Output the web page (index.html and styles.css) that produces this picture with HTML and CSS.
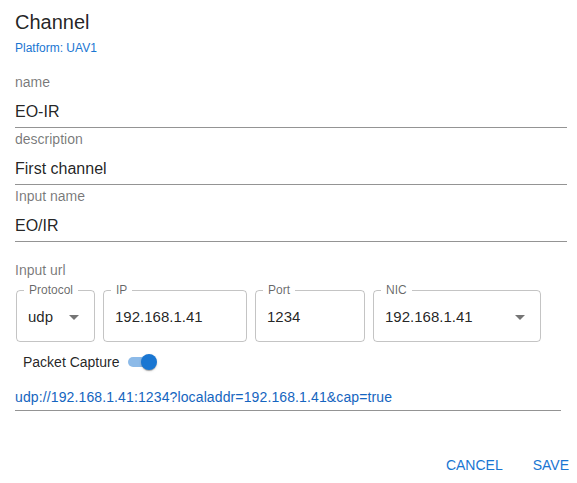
FILE: index.html
```html
<!DOCTYPE html>
<html lang="en">
<head>
<meta charset="utf-8">
<title>Channel</title>
<link rel="stylesheet" href="styles.css">
</head>
<body>
<div class="dialog">
  <header class="dialog-title">
    <h2 class="title">Channel</h2>
    <div class="subtitle">Platform: UAV1</div>
  </header>

  <div class="dialog-content">
    <div class="field">
      <div class="field-label">name</div>
      <div class="field-input">EO-IR</div>
    </div>
    <div class="field">
      <div class="field-label">description</div>
      <div class="field-input">First channel</div>
    </div>
    <div class="field">
      <div class="field-label">Input name</div>
      <div class="field-input">EO/IR</div>
    </div>

    <div class="url-group">
      <div class="field-label">Input url</div>
      <div class="outlined-row">
        <fieldset class="outlined protocol">
          <legend>Protocol</legend>
          <div class="outlined-value select">
            <span class="value-text">udp</span>
            <svg class="arrow" viewBox="0 0 24 24" width="24" height="24"><path d="M7 10l5 5 5-5z"/></svg>
          </div>
        </fieldset>
        <fieldset class="outlined ip">
          <legend>IP</legend>
          <div class="outlined-value"><span class="value-text">192.168.1.41</span></div>
        </fieldset>
        <fieldset class="outlined port">
          <legend>Port</legend>
          <div class="outlined-value"><span class="value-text">1234</span></div>
        </fieldset>
        <fieldset class="outlined nic">
          <legend>NIC</legend>
          <div class="outlined-value select">
            <span class="value-text">192.168.1.41</span>
            <svg class="arrow" viewBox="0 0 24 24" width="24" height="24"><path d="M7 10l5 5 5-5z"/></svg>
          </div>
        </fieldset>
      </div>

      <div class="switch-row">
        <span class="switch-label">Packet Capture</span>
        <span class="switch">
          <span class="switch-track"></span>
          <span class="switch-thumb"></span>
        </span>
      </div>

      <div class="url-value">udp://192.168.1.41:1234?localaddr=192.168.1.41&amp;cap=true</div>
    </div>
  </div>

  <div class="dialog-actions">
    <button class="btn" type="button">Cancel</button>
    <button class="btn" type="button">Save</button>
  </div>
</div>
</body>
</html>
```

FILE: styles.css
```css
* { box-sizing: border-box; }

html, body {
  margin: 0;
  padding: 0;
  background: #ffffff;
}

body {
  width: 577px;
  height: 483px;
  overflow: hidden;
  font-family: "Liberation Sans", Arial, sans-serif;
  color: rgba(0, 0, 0, 0.87);
}

.dialog {
  display: flex;
  flex-direction: column;
}

.dialog-title {
  padding: 10px 10px 0 15px;
}

.title {
  margin: 0;
  font-size: 20px;
  font-weight: 400;
  line-height: 24px;
  color: rgba(0, 0, 0, 0.87);
}

.subtitle {
  margin-top: 6px;
  font-size: 12px;
  line-height: 16px;
  color: #1976d2;
}

.dialog-content {
  padding: 16px 10px 0 15px;
  display: flex;
  flex-direction: column;
  gap: 1px;
}

.field {
  display: flex;
  flex-direction: column;
}

.field-label {
  font-size: 14px;
  line-height: 20px;
  color: rgba(0, 0, 0, 0.54);
}

.field-input {
  padding: 10px 0 5px;
  font-size: 16px;
  line-height: 20px;
  color: rgba(0, 0, 0, 0.87);
  border-bottom: 1px solid rgba(0, 0, 0, 0.42);
}

.url-group {
  margin-top: 17px;
  display: flex;
  flex-direction: column;
}

.outlined-row {
  display: flex;
  gap: 8px;
  margin-top: 3px;
  padding-left: 1px;
}

.outlined {
  margin: 0;
  padding: 0 0 0 11px;
  border: 1px solid rgba(0, 0, 0, 0.23);
  border-radius: 4px;
  min-width: 0;
}

.outlined legend {
  margin-left: -4px;
  padding: 0 5px;
  font-size: 12px;
  line-height: 14px;
  color: rgba(0, 0, 0, 0.6);
}

.protocol { width: 79px; }
.ip { width: 144px; }
.port { width: 110px; }
.nic { width: 168px; }

.outlined-value {
  display: flex;
  align-items: center;
  height: 44px;
  padding-top: 10px;
  padding-bottom: 15px;
  font-size: 15px;
  line-height: 19px;
  color: rgba(0, 0, 0, 0.87);
}

.outlined-value .value-text {
  flex: 1;
  white-space: nowrap;
}

.arrow {
  flex: none;
  margin-right: 8px;
  fill: rgba(0, 0, 0, 0.54);
}

.switch-row {
  display: flex;
  align-items: center;
  margin-top: 8px;
  padding-left: 8px;
  height: 24px;
}

.switch-label {
  font-size: 14px;
  line-height: 20px;
  color: rgba(0, 0, 0, 0.87);
}

.switch {
  position: relative;
  width: 40px;
  height: 24px;
  margin-left: 1px;
}

.switch-track {
  position: absolute;
  left: 7px;
  top: 7px;
  width: 26px;
  height: 10px;
  border-radius: 5px;
  background: #1976d2;
  opacity: 0.5;
}

.switch-thumb {
  position: absolute;
  left: 20px;
  top: 4px;
  width: 16px;
  height: 16px;
  border-radius: 50%;
  background: #1976d2;
  box-shadow: 0 2px 1px -1px rgba(0,0,0,0.2), 0 1px 1px 0 rgba(0,0,0,0.14), 0 1px 3px 0 rgba(0,0,0,0.12);
}

.url-value {
  margin-top: 13px;
  margin-right: 6px;
  padding-bottom: 3px;
  font-size: 14px;
  line-height: 20px;
  letter-spacing: 0.12px;
  color: #1565c0;
  border-bottom: 1px solid rgba(0, 0, 0, 0.42);
  white-space: nowrap;
}

.dialog-actions {
  display: flex;
  justify-content: flex-end;
  gap: 14px;
  margin-top: 36px;
  padding-right: 0;
}

.btn {
  border: 0;
  background: transparent;
  padding: 6px 8px;
  font-family: "Liberation Sans", Arial, sans-serif;
  font-size: 14px;
  line-height: 24px;
  text-transform: uppercase;
  color: #1976d2;
  cursor: pointer;
}
```
